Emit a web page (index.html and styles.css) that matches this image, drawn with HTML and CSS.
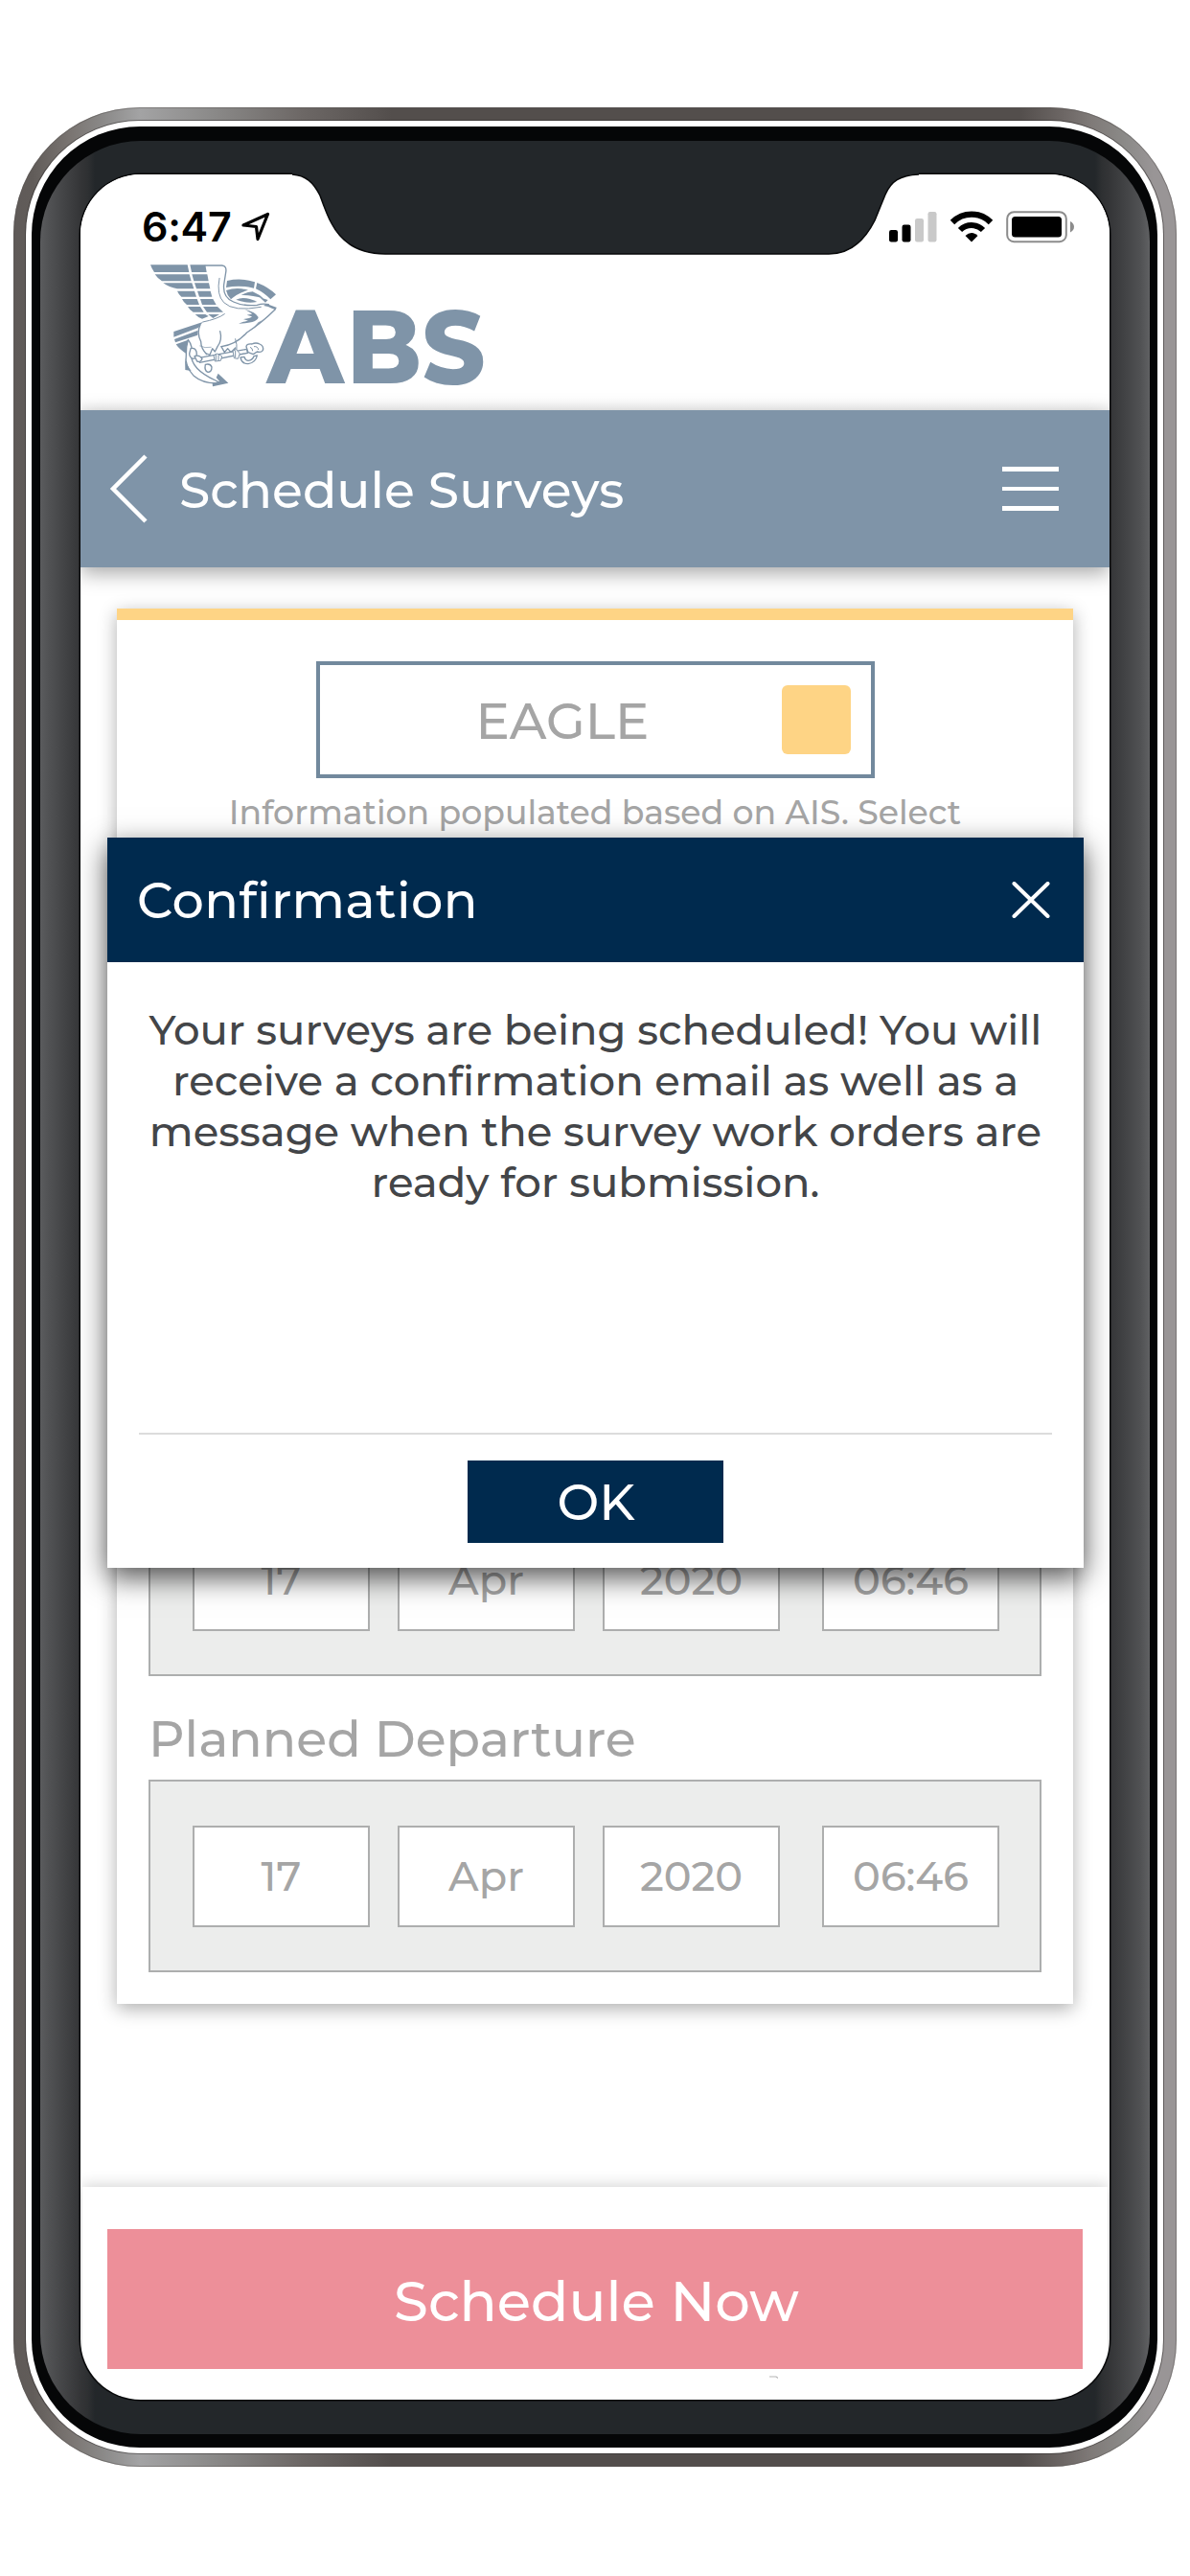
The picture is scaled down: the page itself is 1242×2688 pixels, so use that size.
FILE: index.html
```html
<!DOCTYPE html>
<html lang="en">

<head>
  <meta charset="UTF-8">
  <title>Schedule Surveys</title>
  <link rel="stylesheet" href="styles.css">
</head>

<body>
  <div class="phone">
    <div class="phone-gap">
      <div class="phone-edge">
        <div class="bezel">
          <div class="screen">

            <div class="top-area">
              <div class="status-bar">
                <span class="time">6:47</span>
                <svg class="location" width="30" height="32" viewBox="0 0 30 32">
                  <path d="M2 14 L27.5 2.5 L17 28.5 L15.5 15.5 Z" fill="none" stroke="#000" stroke-width="3.2" stroke-linejoin="round" />
                </svg>
                <svg class="signal" width="50" height="33" viewBox="0 0 50 33">
                  <rect x="0" y="20" width="9" height="12.5" rx="2.2" />
                  <rect x="13.5" y="14.5" width="9" height="18" rx="2.2" />
                  <rect x="27" y="8" width="9" height="24.5" rx="2.2" fill="#c9c9c9" />
                  <rect x="40.5" y="1" width="9" height="31.5" rx="2.2" fill="#c9c9c9" />
                </svg>
                <svg class="wifi" width="44" height="33" viewBox="0 0 44 33">
                  <path d="M2 12 A28 28 0 0 1 42 12" fill="none" stroke="#000" stroke-width="6.2" />
                  <path d="M10 20 A17 17 0 0 1 34 20" fill="none" stroke="#000" stroke-width="6" />
                  <path d="M15.5 26 Q22 20 28.5 26 L22 32.5 Z" />
                </svg>
                <svg class="battery" width="72" height="34" viewBox="0 0 72 34">
                  <rect x="1.2" y="1.2" width="61.6" height="31" rx="7" fill="none" stroke="#8c8c8c" stroke-width="2" />
                  <rect x="6" y="6" width="52" height="21.5" rx="3.5" />
                  <path d="M67 11 Q71 13 71 16.8 Q71 20.5 67 22.5 Z" fill="#8c8c8c" />
                </svg>
              </div>

              <svg class="logo" width="354" height="134" viewBox="50 40 1062 402">
                <g fill="#7f94a8">
                  <!-- left wing feathers -->
                  <path d="M50 50H166L171 73H62Q54 62 50 50Z M174 50H222L226 73H179Z" />
                  <path d="M64 80H172L178 101H86Q72 92 64 80Z M180 80H228L232 101H186Z" />
                  <path d="M90 107H180L186 125H134Q108 120 90 107Z M188 107H233L237 125H194Z" />
                  <path d="M134 132H188L194 150H147Q138 142 134 132Z M197 132H238L243 150H203Z" />
                  <path d="M149 157H196L203 175H164Q154 168 149 157Z M206 157H246L256 175H212Z" />
                  <path d="M167 181H206L217 198H184Q173 192 167 181Z M215 181H260L278 198H227Z" />
                  <path d="M190 205H222L232 211L212 219Q198 214 190 205Z M231 205H266L246 217Z" />
                  <!-- right wing -->
                  <path d="M290 100Q335 90 377 104L374 123Q330 112 287 121Z" />
                  <path d="M384 106Q420 120 443 143L426 158Q407 138 380 125Z" />
                  <path d="M287 130Q320 119 356 129Q322 139 302 158Q290 146 287 130Z" />
                  <path d="M334 145Q352 135 370 134Q391 143 405 156Q366 144 334 145Z" />
                  <path d="M318 159Q345 147 384 166Q350 172 318 159Z" />
                  <path d="M392 152L418 160L410 168Z" />
                  <!-- tail -->
                  <path d="M123 259L214 229L200 247L123 276Z" />
                  <path d="M125 283L199 255L198 270L128 293Z" />
                  <path d="M130 299L168 285L162 328Q140 314 130 299Z" />
                  <!-- chest shading -->
                  <path d="M346 190Q380 198 388 214Q386 232 326 234Q344 227 356 225Q346 222 340 220Q362 219 368 212Q360 209 352 207Q366 206 368 203Z" />
                  <path d="M414 172L446 184L440 190L430 186Q420 180 404 178Z" />
                  <path d="M388 230Q400 224 404 220L372 248Z" />
                </g>
                <g fill="none" stroke="#7f94a8" stroke-width="4" stroke-linecap="round" stroke-linejoin="round">
                  <path d="M222 52H274Q290 54 286 74L280 112Q276 152 310 166Q340 180 384 176Q402 170 420 174" />
                  <path d="M266 92Q256 144 280 168Q310 198 396 182" stroke-width="3" />
                  <path d="M441 189Q400 230 352 262Q318 300 272 306" />
                  <path d="M214 229Q260 220 282 204" stroke-width="3" />
                  <!-- legs -->
                  <path d="M206 238Q194 262 208 290Q208 312 226 330" />
                  <path d="M268 258Q276 286 260 306L252 322L244 312L236 332L226 328" />
                  <path d="M205 304Q220 312 240 308" stroke-width="2" />
                  <path d="M272 306L282 324L292 312L302 324L316 310" />
                  <path d="M316 282Q322 300 320 316" stroke-width="3" />
                </g>
                <!-- anchor -->
                <g fill="#fff" stroke="#7f94a8" stroke-width="4" stroke-linejoin="round">
                  <path d="M168 284Q184 306 178 330Q176 376 254 412L268 420Q216 424 186 398Q156 366 162 330Q162 304 168 284Z" />
                  <path d="M198 342L352 314L354 326L204 356Z" />
                  <path d="M332 340Q336 360 356 360Q380 356 384 334L374 336Q370 348 356 350Q346 348 344 338Z" />
                  <path d="M350 306Q352 296 368 298Q380 292 392 298Q406 304 402 318Q396 326 384 322L372 330L356 324Z" />
                  <path d="M374 306Q386 304 388 316M362 308Q370 310 370 320" fill="none" stroke-width="3" />
                  <path d="M176 312Q190 308 194 322Q198 338 186 344Q172 342 172 328Z" />
                  <path d="M188 336Q204 330 212 344Q208 356 196 352Z" />
                  <path d="M222 362Q238 358 242 370Q242 386 230 386Q218 382 222 362Z" />
                  <path d="M248 334L258 328L274 336L270 350L252 352Z M255 330V350M263 332V350" stroke-width="3" />
                  <path d="M308 320L318 314L330 328L324 344L312 342Z M316 318V340" stroke-width="3" />
                </g>
                <g fill="#7f94a8">
                  <path d="M158 340Q160 362 178 382L159 379Z" />
                  <path d="M262 390L294 420L245 431L244 422L266 414L256 403Z" />
                </g>
                <text class="logo-text" transform="scale(0.94 1)" x="442 707 958" y="420">ABS</text>
              </svg>
            </div>

            <div class="header">
              <svg width="42" height="72" viewBox="0 0 42 72">
                <path d="M38 2 L4 36 L38 70" fill="none" stroke="#fff" stroke-width="4.5" />
              </svg>
              <h1>Schedule Surveys</h1>
              <div class="menu-btn">
                <span></span>
                <span></span>
                <span></span>
              </div>
            </div>

            <div class="card">
              <div class="vessel-box">
                <span class="vessel-name">EAGLE</span>
                <span class="vessel-color"></span>
              </div>
              <p class="info">Information populated based on AIS. Select</p>

              <div class="date-panel arrival">
                <div class="date-box">17</div>
                <div class="date-box">Apr</div>
                <div class="date-box">2020</div>
                <div class="date-box time-box">06:46</div>
              </div>

              <h3>Planned Departure</h3>
              <div class="date-panel">
                <div class="date-box">17</div>
                <div class="date-box">Apr</div>
                <div class="date-box">2020</div>
                <div class="date-box time-box">06:46</div>
              </div>
            </div>

            <div class="footer">
              <button type="button" class="schedule-btn">Schedule Now</button>
              <svg class="mark" width="9" height="4" viewBox="0 0 9 4">
                <path d="M0 1H7L9 2.5" fill="none" stroke="#b5b5b5" stroke-width="1.2" />
              </svg>
            </div>

            <div class="modal">
              <div class="modal-header">
                <h2>Confirmation</h2>
                <svg width="40" height="38" viewBox="0 0 40 38">
                  <path d="M2.5 2 L37.5 36 M37.5 2 L2.5 36" stroke="#fff" stroke-width="4" stroke-linecap="round" />
                </svg>
              </div>
              <p class="message">
                Your surveys are being scheduled! You will<br>
                receive a confirmation email as well as a<br>
                message when the survey work orders are<br>
                ready for submission.
              </p>
              <div class="modal-footer">
                <button type="button" class="ok-btn">OK</button>
              </div>
            </div>
          </div>

          <svg class="notch" width="654" height="88" viewBox="0 -3 654 88">
            <path d="M0 -2H654V0C634 1 625 7 619 21L608 48C597 70 582 83 560 83H97C73 83 53 74 41 51C37 44 34 36 29 22C22 8 14 1 0 0Z" fill="#23272a" />
            <path d="M0 0C14 1 22 8 29 22C34 36 37 44 41 51C53 74 73 83 97 83H560C582 83 597 70 608 48L619 21C625 7 634 1 654 0" fill="none" stroke="#08090a" stroke-width="1.5" />
          </svg>
        </div>
      </div>
    </div>
  </div>
</body>

</html>
```
FILE: styles.css
```css
* {
  box-sizing: border-box;
}

body {
  font-family: Montserrat, Inter, sans-serif;
  font-weight: 500;
  font-variant-ligatures: none;
  background-color: #fff;
  margin: 0;
  padding: 112px 14px 0;
}

h1,
h2,
h3,
p {
  margin: 0;
  font-weight: 500;
}

button {
  font-family: inherit;
  font-weight: 500;
  border: none;
  color: white;
}

svg {
  display: block;
}

/* phone frame */
.phone {
  width: 1214px;
  height: 2462px;
  padding: 14px 14px 14px 13px;
  border-radius: 132px;
  background: linear-gradient(to right, #5f5a58 0, #615c59 20px, #7a7572 60px, #8b8a89 95px, #a3a3a4 132px, #8a8988 210px, #6d6866 300px, #534e4c 395px, #534e4c 1050px, #6c6664 1095px, #7f7a78 1125px, #8b8a88 1160px, #999596 1190px);
  box-shadow: inset 0 0 0 1px rgba(90, 86, 84, 0.5);
}

.phone-gap {
  height: 100%;
  padding: 6px;
  border-radius: 119px;
  background-color: white;
  box-shadow: 0 0 0 1px rgba(50, 45, 45, 0.55);
}

.phone-edge {
  height: 100%;
  padding: 15px 8px 14px 9px;
  border-radius: 113px;
  background-color: #050607;
}

.bezel {
  position: relative;
  height: 100%;
  padding: 35px 42px 36px;
  border-radius: 105px;
  background: linear-gradient(to right, #5b5c5e 0, #505153 10px, #343537 42px, #2e3032 50px, #23272a 57px, #23272a 1101px, #2e3032 1108px, #343537 1116px, #505153 1148px, #606163 1158px);
}

.screen {
  position: relative;
  display: flex;
  flex-direction: column;
  height: 2322px;
  border-radius: 63px;
  background-color: white;
  box-shadow: 0 0 0 1.5px #08090a;
  overflow: hidden;
}

.notch {
  position: absolute;
  top: 32px;
  left: 263px;
}

/* status bar and logo */
.top-area {
  height: 246px;
  padding-top: 28px;
  background: linear-gradient(to bottom, #fff 234px, #f7f7f7 246px);
}

.status-bar {
  display: flex;
  align-items: center;
  height: 53px;
  padding: 0 36px 0 64px;
}

.time {
  font-family: Inter, sans-serif;
  font-size: 43px;
  font-weight: 600;
  line-height: 53px;
  letter-spacing: -0.3px;
}

.location {
  margin-left: 11px;
}

.signal {
  margin-left: auto;
}

.wifi {
  margin-left: 14px;
}

.battery {
  margin-left: 14px;
}

.logo {
  margin: 10px 0 0 73px;
}

.logo-text {
  font-size: 325px;
  font-weight: 800;
  fill: #7f94a8;
}

.header {
  position: relative;
  display: flex;
  align-items: center;
  flex: none;
  height: 164px;
  padding: 0 53px 0 30px;
  color: white;
  background-color: #7f94a8;
  box-shadow: 0 6px 20px rgba(0, 0, 0, 0.35);
}

.header h1 {
  margin-left: 31px;
  padding-top: 3px;
  font-size: 52px;
}

.menu-btn {
  display: flex;
  flex-direction: column;
  gap: 16px;
  margin-left: auto;
}

.menu-btn span {
  width: 59px;
  height: 4.5px;
  background-color: white;
}

/* survey card */
.card {
  display: flex;
  flex-direction: column;
  flex: none;
  width: 998px;
  height: 1456px;
  margin: 43px 0 0 38px;
  padding: 43px 33px 33px;
  color: #a5a5a5;
  background-color: white;
  border-top: 12px solid #fed485;
  box-shadow: 0 5px 18px rgba(0, 0, 0, 0.32);
}

.vessel-box {
  display: flex;
  align-items: center;
  align-self: center;
  width: 583px;
  height: 122px;
  padding: 0 21px 0 25px;
  border: 4px solid #72899d;
}

.vessel-name {
  flex: 1;
  padding-top: 2px;
  font-size: 52.8px;
  text-align: center;
}

.vessel-color {
  width: 72px;
  height: 72px;
  border-radius: 6px;
  background-color: #fed485;
}

.info {
  margin-top: 16px;
  font-size: 34.7px;
  line-height: 40px;
  text-align: center;
}

.card h3 {
  margin: 36px 0 12px;
  font-size: 52.1px;
  line-height: 60px;
}

.date-panel {
  display: flex;
  align-items: center;
  gap: 29px;
  height: 201px;
  padding-left: 44px;
  background-color: #ecedec;
  border: 2px solid #adaeae;
}

.arrival {
  margin-top: auto;
}

.date-box {
  width: 185px;
  height: 106px;
  font-size: 43.2px;
  line-height: 102px;
  text-align: center;
  background-color: white;
  border: 2px solid #adaeae;
}

.time-box {
  margin-left: 15px;
}

.footer {
  flex: none;
  height: 222px;
  margin: auto 2px 0;
  padding: 44px 26px 0;
  box-shadow: 0 -2px 14px rgba(0, 0, 0, 0.17);
}

.schedule-btn {
  display: block;
  width: 100%;
  height: 146px;
  padding: 4px 0 0 3px;
  font-size: 57.7px;
  background-color: #ed8f99;
}

.mark {
  margin: 7px 0 0 691px;
}

/* confirmation dialog */
.modal {
  position: absolute;
  top: 692px;
  left: 28px;
  display: flex;
  flex-direction: column;
  width: 1019px;
  height: 762px;
  background-color: white;
  box-shadow: 0 10px 28px rgba(0, 0, 0, 0.68);
}

.modal-header {
  display: flex;
  justify-content: space-between;
  align-items: center;
  height: 130px;
  padding: 0 35px 0 31px;
  color: white;
  background-color: #002a4e;
}

.modal-header h2 {
  font-size: 52.5px;
  letter-spacing: 0.3px;
}

.message {
  flex: 1;
  padding-top: 44px;
  font-size: 43.4px;
  line-height: 53px;
  text-align: center;
  color: #434548;
}

.modal-footer {
  display: flex;
  justify-content: center;
  height: 141px;
  margin: 0 33px;
  padding-top: 27px;
  border-top: 2px solid #dcdcdc;
}

.ok-btn {
  width: 267px;
  height: 86px;
  padding: 1px 0 0 1px;
  font-size: 52px;
  background-color: #002a4e;
}
```
